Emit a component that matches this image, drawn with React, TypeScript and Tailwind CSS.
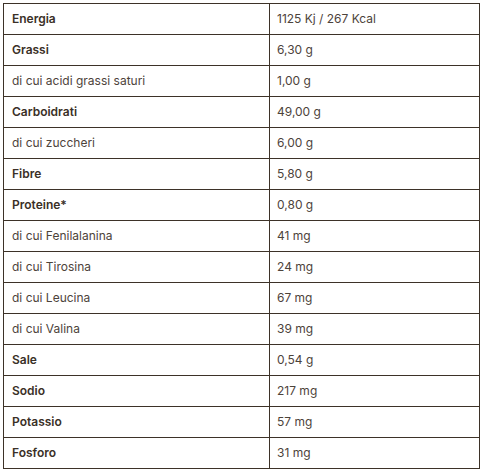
const rows: [string, string, boolean][] = [
  ['Energia', '1125 Kj / 267 Kcal', true],
  ['Grassi', '6,30 g', true],
  ['di cui acidi grassi saturi', '1,00 g', false],
  ['Carboidrati', '49,00 g', true],
  ['di cui zuccheri', '6,00 g', false],
  ['Fibre', '5,80 g', true],
  ['Proteine*', '0,80 g', true],
  ['di cui Fenilalanina', '41 mg', false],
  ['di cui Tirosina', '24 mg', false],
  ['di cui Leucina', '67 mg', false],
  ['di cui Valina', '39 mg', false],
  ['Sale', '0,54 g', true],
  ['Sodio', '217 mg', true],
  ['Potassio', '57 mg', true],
  ['Fosforo', '31 mg', true],
];

export default function App() {
  return (
    <div className="p-[3px] bg-white" style={{ fontFamily: 'Inter, "Noto Sans", sans-serif' }}>
      <table className="w-[477px] border-collapse text-[12px] text-[#4d433b]">
        <tbody>
          {rows.map(([label, value, bold]) => (
            <tr key={label} className="h-[31px]">
              <td className={`w-[266px] border border-[#3d3228] pl-[8px] leading-[14px] ${bold ? 'font-semibold text-[#3a3027]' : ''}`}>{label}</td>
              <td className="border border-[#3d3228] pl-[7px] leading-[14px]">{value}</td>
            </tr>
          ))}
        </tbody>
      </table>
    </div>
  );
}
